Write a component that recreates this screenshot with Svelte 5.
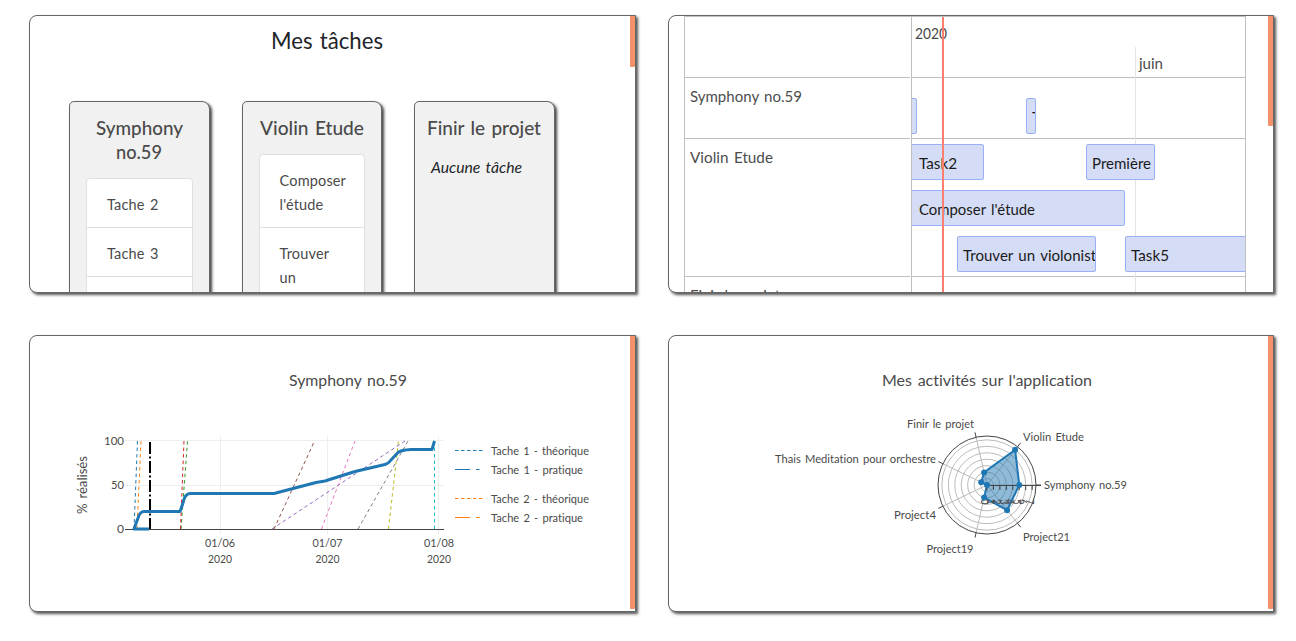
<script>
  const lists = [
    { title: ['Symphony', 'no.59'], size: [87, 46], tasks: [['Tache 2'], ['Tache 3'], ['Tache 4']] },
    { title: ['Violin Etude'], size: [104], tasks: [['Composer', "l'étude"], ['Trouver', 'un', 'violoniste']] },
    { title: ['Finir le projet'], size: [114], tasks: [] }
  ];
  const rows = [
    { name: 'Symphony no.59', width: 112, height: 61 },
    { name: 'Violin Etude', width: 83, height: 138 },
    { name: 'Finir le projet', width: 90, height: 61 }
  ];
  const items = [
    { x: -9, y: 81, w: 14, text: '', tw: 0 },
    { x: 114, y: 81, w: 10, text: 'Tache 3', tw: 53 },
    { x: -3, y: 127, w: 75, text: 'Task2', tw: 38, pad: 9 },
    { x: 174, y: 127, w: 69, text: 'Première', tw: 59 },
    { x: -3, y: 173, w: 216, text: "Composer l'étude", tw: 116, pad: 9 },
    { x: 45, y: 219, w: 139, text: 'Trouver un violoniste', tw: 141 },
    { x: 213, y: 219, w: 140, text: 'Task5', tw: 38 }
  ];
  const dashes = [
    [134, 529, 137.5, 441, '#1f77b4'], [137, 529, 141, 441, '#ff7f0e'],
    [181, 529, 187.5, 441, '#2ca02c'], [180.5, 529, 184, 441, '#d62728'],
    [272, 529, 405, 441, '#9467bd'], [274, 529, 314.5, 441, '#8c564b'],
    [321.5, 529, 355, 441, '#e377c2'], [358, 529, 408, 441, '#7f7f7f'],
    [388.5, 529, 398.5, 441, '#bcbd22'], [434.5, 529, 434.5, 441, '#17becf']
  ];
  const legend = [
    { y: 450.5, label: 'Tache 1 - théorique', w: 98, c: '#1f77b4', d: '3.5 2.5' },
    { y: 469.5, label: 'Tache 1 - pratique', w: 92, c: '#1f77b4', d: '15 6 3.5 6' },
    { y: 498.5, label: 'Tache 2 - théorique', w: 98, c: '#ff7f0e', d: '3.5 2.5' },
    { y: 517.5, label: 'Tache 2 - pratique', w: 92, c: '#ff7f0e', d: '15 6 3.5 6' }
  ];
  const cx = 987, cy = 485;
  const spokes = Array.from({ length: 7 }, (_, i) => {
    const a = (i * 2 * Math.PI) / 7;
    return { c: Math.cos(a), s: -Math.sin(a) };
  });
  const values = [5, 7, 2, 1, 0, 2, 5];
  const points = values.map((v, i) => [cx + spokes[i].c * v * 6.45, cy + spokes[i].s * v * 6.45]);
  const names = [
    ['Symphony no.59', 1044, 489, 83], ['Violin Etude', 1023, 441, 61],
    ['Finir le projet', 907, 428, 67], ['Thais Meditation pour orchestre', 775, 463, 161],
    ['Project4', 894, 519, 42], ['Project19', 926.5, 553, 47], ['Project21', 1023, 541, 47]
  ];
</script>

{#snippet label(text, width, size)}
  <svg class="label" width={width} height="24"><text x="0" y="17" font-size={size} textLength={width} lengthAdjust="spacingAndGlyphs">{text}</text></svg>
{/snippet}

<main>
  <section class="card">
    <h1>{@render label('Mes tâches', 112, 23)}</h1>
    <div class="lists">
      {#each lists as list}
        <article>
          <h2>
            {#each list.title as line, i}{@render label(line, list.size[i], 18.5)}{/each}
          </h2>
          {#if list.tasks.length}
            <ul>
              {#each list.tasks as task}
                <li>{#each task as line}<span>{line}</span>{/each}</li>
              {/each}
            </ul>
          {:else}
            <p>{@render label('Aucune tâche', 91, 15)}</p>
          {/if}
        </article>
      {/each}
    </div>
    <i class="bar short"></i>
  </section>

  <section class="card planning">
    <div class="timeline">
      <div class="names">
        <div class="head"></div>
        {#each rows as row}
          <div class="name" style:height="{row.height}px">{@render label(row.name, row.width, 15)}</div>
        {/each}
      </div>
      <div class="center">
        <div class="head"></div>
        {#each rows as row}<div class="row" style:height="{row.height}px"></div>{/each}
        <i class="month"></i>
        <span class="year">{@render label('2020', 32, 15)}</span>
        <span class="june">{@render label('juin', 24, 15)}</span>
        {#each items as item}
          <div class="item" style:left="{item.x}px" style:top="{item.y}px" style:width="{item.w}px" style:padding-left="{item.pad ?? 5}px">
            {#if item.text}{@render label(item.text, item.tw, 15)}{/if}
          </div>
        {/each}
        <i class="now"></i>
      </div>
    </div>
    <i class="bar medium"></i>
  </section>

  <section class="card">
    <svg class="chart" width="600" height="275" viewBox="30 336 600 275">
      <text x="289" y="386" font-size="15.5" textLength="118" lengthAdjust="spacingAndGlyphs">Symphony no.59</text>
      <path d="M125 440.5H444M125 485.5H444M220.5 436V534M327.5 436V534M438.5 436V534" stroke="#eee" />
      {#each dashes as [x1, y1, x2, y2, color]}
        <line {x1} {y1} {x2} {y2} stroke={color} stroke-dasharray="3.5 3" />
      {/each}
      <path d="M125 529.5H444" stroke="#444" />
      <path d="M150 442V529" stroke="#000" stroke-width="2" stroke-dasharray="12 2.5 2 2.5" />
      <path d="M149 529H134L138 518Q140 511.5 144 511.5H180L183 503Q185 493.5 190 493.5H274L316 482.5 325 481 355 471.5 385 464.5Q389 463 391 460L398 452.5Q401 450 411 449.5H432L434.5 441" fill="none" stroke="#1f77b4" stroke-width="3" stroke-linejoin="round" />
      <text x="104" y="445" textLength="20" lengthAdjust="spacingAndGlyphs">100</text>
      <text x="111" y="489" textLength="13" lengthAdjust="spacingAndGlyphs">50</text>
      <text x="117" y="533" textLength="7" lengthAdjust="spacingAndGlyphs">0</text>
      <text transform="translate(87 514) rotate(-90)" font-size="13" textLength="58" lengthAdjust="spacingAndGlyphs">% réalisés</text>
      {#each [[220, '01/06'], [327.5, '01/07'], [439, '01/08']] as [x, day]}
        <text x={x - 15} y="547" textLength="30" lengthAdjust="spacingAndGlyphs">{day}</text>
        <text x={x - 12} y="563" textLength="24" lengthAdjust="spacingAndGlyphs">2020</text>
      {/each}
      {#each legend as l}
        <line x1="455" x2="483" y1={l.y} y2={l.y} stroke={l.c} stroke-dasharray={l.d} />
        <text x="491" y={l.y + 4.5} textLength={l.w} lengthAdjust="spacingAndGlyphs">{l.label}</text>
      {/each}
    </svg>
    <i class="bar"></i>
  </section>

  <section class="card">
    <svg class="chart" width="600" height="275" viewBox="669 336 600 275">
      <text x="882" y="386" font-size="15.5" textLength="210" lengthAdjust="spacingAndGlyphs">Mes activités sur l'application</text>
      {#each [1, 2, 3, 4, 5, 6, 7] as r}
        <circle {cx} {cy} r={r * 6.45} fill="none" stroke="#bbb" />
      {/each}
      {#each spokes as s}
        <line x1={cx} y1={cy} x2={cx + s.c * 49} y2={cy + s.s * 49} stroke="#bbb" />
        <line x1={cx + s.c * 49} y1={cy + s.s * 49} x2={cx + s.c * 54} y2={cy + s.s * 54} stroke="#444" />
      {/each}
      <circle {cx} {cy} r="49" fill="none" stroke="#444" />
      <polygon points={points.map((p) => p.join(',')).join(' ')} fill="#1f77b4" fill-opacity=".5" stroke="#1f77b4" stroke-width="2" />
      <path d="M987 485.5H1041" stroke="#444" />
      {#each [0, 1, 2, 3, 4, 5, 6, 7] as n}
        <path d="M{cx + n * 6.45} 485v5" stroke="#444" />
        <text class="tick" transform="translate({cx + n * 6.45 - 6.5} 499) rotate(90)" textLength="5.5" lengthAdjust="spacingAndGlyphs">{n}</text>
      {/each}
      {#each points as [x, y]}<circle cx={x} cy={y} r="3" fill="#1f77b4" />{/each}
      {#each names as [name, x, y, w]}
        <text {x} {y} textLength={w} lengthAdjust="spacingAndGlyphs">{name}</text>
      {/each}
    </svg>
    <i class="bar"></i>
  </section>
</main>

<style>
  :global(body) { margin: 0; background: #fff; }
  main {
    box-sizing: border-box;
    width: 1296px;
    height: 641px;
    padding: 15px 0 0 29px;
    display: grid;
    grid-template-columns: 607px 606px;
    grid-template-rows: 278px 277px;
    gap: 42px 32px;
    overflow: hidden;
    font-family: Lato, "Liberation Sans", sans-serif;
    font-variant-ligatures: none;
    word-spacing: 1.5px;
    color: #4a4a4a;
  }
  .card {
    position: relative;
    box-sizing: border-box;
    border: 1px solid #666;
    border-radius: 8px 0 0 8px;
    box-shadow: 2px 2px 3px #555;
    overflow: hidden;
    background: #fff;
  }
  .bar { position: absolute; right: 0; top: 0; width: 5px; height: 273px; background: #f4926b; border-radius: 0 0 1px 1px; }
  .bar.short { height: 51px; }
  .bar.medium { height: 110px; }
  svg { display: block; overflow: visible; }
  svg text { fill: currentColor; }
  .chart { font-size: 12.3px; }
  .tick { font-size: 12px; }
  h1 { margin: 0; height: 85px; box-sizing: border-box; padding: 16px 12px 0 0; display: flex; justify-content: center; font-weight: 400; color: #212529; }
  .lists { display: flex; gap: 32px; padding-left: 39px; }
  article {
    box-sizing: border-box;
    width: 140.6px;
    height: 260px;
    padding: 16px 16px 0;
    border: 1px solid #666;
    border-radius: 5px 8px 0 0;
    box-shadow: 2px 2px 3px #444;
    background: #f1f1f1;
  }
  h2 { margin: 0 -10px 12px; display: flex; flex-direction: column; align-items: center; font-weight: 500; -webkit-text-stroke: .25px #4a4a4a; }
  ul { list-style: none; margin: 0; padding: 0; background: #fff; border: 1px solid #dfdfdf; border-radius: 4px; }
  li { padding: 14px 20px 10px; border-bottom: 1px solid #dfdfdf; font-size: 14.5px; line-height: 24px; letter-spacing: .15px; }
  li span { display: block; white-space: nowrap; }
  p { margin: 14px 0 0; font-style: italic; color: #212529; }
  .timeline { display: flex; margin-left: 15px; width: 562px; box-sizing: border-box; border: 1px solid #bfbfbf; height: 340px; }
  .names { width: 225px; margin-right: 1px; }
  .head { height: 60px; border-bottom: 1px solid #bfbfbf; }
  .name, .row { box-sizing: border-box; border-bottom: 1px solid #bfbfbf; }
  .name { padding: 7px 0 0 4.5px; color: #4d4d4d; }
  .center { position: relative; flex: 1; border-left: 1px solid #bfbfbf; overflow: hidden; }
  .month { position: absolute; left: 223px; top: 30px; width: 1px; bottom: 0; background: #e5e5e5; }
  .year { position: absolute; left: 3px; top: 5px; }
  .june { position: absolute; left: 227px; top: 35px; }
  .item { position: absolute; box-sizing: border-box; height: 36px; padding-top: 7px; border: 1px solid #97b0f8; border-radius: 2px; background: #d5ddf6; color: #1a1a1a; overflow: hidden; }
  .now { position: absolute; left: 30px; top: 0; width: 2px; bottom: 0; background: #ff7f6e; }
</style>
